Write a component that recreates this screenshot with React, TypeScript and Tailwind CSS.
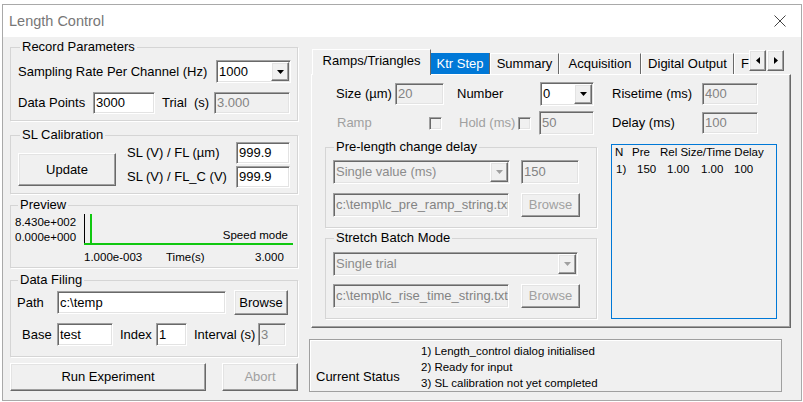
import React from "react";

const sunken =
  "border border-t-[#a0a0a0] border-l-[#a0a0a0] border-r-white border-b-white shadow-[inset_1px_1px_0_#696969,inset_-1px_-1px_0_#e3e3e3]";
const raised =
  "border border-t-white border-l-white border-r-[#696969] border-b-[#696969] shadow-[inset_-1px_-1px_0_#a0a0a0,inset_1px_1px_0_#e3e3e3]";
const group = "min-w-0 border border-[#d5d5d5] shadow-[1px_1px_0_#ffffff]";

type FieldProps = { className?: string; value: string; disabled?: boolean };

function Field({ className = "", value, disabled = false }: FieldProps) {
  return (
    <div
      className={`${sunken} ${
        disabled ? "bg-[#f0f0f0] text-[#838383]" : "bg-white text-black"
      } flex items-center pl-[2px] whitespace-nowrap overflow-hidden shrink-0 ${className}`}
    >
      {value}
    </div>
  );
}

function Combo({ className = "", value, disabled = false }: FieldProps) {
  return (
    <div
      className={`${sunken} ${
        disabled ? "bg-[#f0f0f0] text-[#8c8c8c]" : "bg-white text-black"
      } flex items-stretch p-[1px] shrink-0 ${className}`}
    >
      <div className="flex-1 flex items-center pl-[1px] whitespace-nowrap overflow-hidden">{value}</div>
      <div className={`${raised} w-[18px] bg-[#f0f0f0] flex items-center justify-center`}>
        <svg width="7" height="4" viewBox="0 0 7 4">
          <path d="M0 0H7L3.5 4Z" fill={disabled ? "#a0a0a0" : "#000000"} />
        </svg>
      </div>
    </div>
  );
}

function Button({
  className = "",
  children,
  disabled = false,
}: {
  className?: string;
  children: React.ReactNode;
  disabled?: boolean;
}) {
  return (
    <div
      className={`${raised} bg-[#f0f0f0] flex items-center justify-center shrink-0 ${
        disabled ? "text-[#a0a0a0]" : "text-black"
      } ${className}`}
    >
      {children}
    </div>
  );
}

function Check() {
  return <div className={`${sunken} w-[13px] h-[13px] bg-[#f0f0f0] shrink-0`} />;
}

function Legend({ children, className = "" }: { children: React.ReactNode; className?: string }) {
  return <legend className={`px-[2px] leading-[14px] ${className}`}>{children}</legend>;
}

function Arrow({ dir }: { dir: "l" | "r" }) {
  return (
    <div className={`${raised} w-[17px] h-[21px] bg-[#f0f0f0] flex items-center justify-center`}>
      <svg width="4" height="7" viewBox="0 0 4 7">
        <path d={dir === "l" ? "M4 0V7L0 3.5Z" : "M0 0V7L4 3.5Z"} fill="#000" />
      </svg>
    </div>
  );
}

function LeftColumn() {
  return (
    <div className="w-[288px] shrink-0 flex flex-col">
      {/* Record Parameters */}
      <fieldset className={`${group} mt-[3px] pb-[6px]`}>
        <Legend className="ml-[9px]">Record Parameters</Legend>
        <div className="flex items-center h-[23px] mt-[6px] pl-[7px]">
          <span className="whitespace-nowrap">Sampling Rate Per Channel (Hz)</span>
          <Combo className="ml-auto mr-[6px] w-[75px] h-[23px]" value="1000" />
        </div>
        <div className="flex items-center h-[22px] mt-[9px] pl-[7px]">
          <span className="w-[75px] whitespace-nowrap">Data Points</span>
          <Field className="w-[62px] h-[22px]" value="3000" />
          <span className="ml-[7px] w-[52px] whitespace-pre">Trial  (s)</span>
          <Field className="w-[76px] h-[22px]" value="3.000" disabled />
        </div>
      </fieldset>

      {/* SL Calibration */}
      <fieldset className={`${group} mt-[7px] pb-[5px]`}>
        <Legend className="ml-[9px]">SL Calibration</Legend>
        <div className="flex">
          <Button className="ml-[7px] mt-[11px] w-[98px] h-[33px]">Update</Button>
          <div className="ml-[11px] flex flex-col gap-[2px]">
            <div className="flex items-center h-[22px]">
              <span className="w-[109px] whitespace-nowrap">SL (V) / FL (µm)</span>
              <Field className="w-[54px] h-[22px]" value="999.9" />
            </div>
            <div className="flex items-center h-[22px]">
              <span className="w-[109px] whitespace-nowrap">SL (V) / FL_C (V)</span>
              <Field className="w-[54px] h-[22px]" value="999.9" />
            </div>
          </div>
        </div>
      </fieldset>

      {/* Preview */}
      <fieldset className={`${group} mt-[4px] pb-[3px]`}>
        <Legend className="ml-[7px]">Preview</Legend>
        <div className="flex pt-[2px]">
          <div className="w-[73px] pl-[4px] pt-[1px] text-[11.5px] leading-[15px]">
            <div>8.430e+002</div>
            <div>0.000e+000</div>
          </div>
          <div className="relative w-[210px] h-[31px]">
            <svg width="210" height="31" viewBox="0 0 210 31" className="block">
              <rect x="0" y="0" width="1" height="30" fill="#000000" />
              <rect x="6" y="0" width="2" height="30" fill="#10c810" />
              <rect x="0" y="29" width="209" height="2" fill="#10c810" />
            </svg>
            <span className="absolute right-[6px] top-[14px] text-[11.5px] leading-[14px] whitespace-nowrap">
              Speed mode
            </span>
          </div>
        </div>
        <div className="flex mt-[5px] text-[11.5px] leading-[14px]">
          <span className="ml-[73px] w-[82px]">1.000e-003</span>
          <span className="w-[89px]">Time(s)</span>
          <span>3.000</span>
        </div>
      </fieldset>

      {/* Data Filing */}
      <fieldset className={`${group} mt-[5px] pb-[10px]`}>
        <Legend className="ml-[7px]">Data Filing</Legend>
        <div className="flex items-center h-[25px] mt-[3px]">
          <span className="ml-[6px] w-[40px]">Path</span>
          <Field className="w-[169px] h-[23px]" value="c:\temp" />
          <Button className="ml-[8px] w-[54px] h-[25px]">Browse</Button>
        </div>
        <div className="flex items-center h-[23px] mt-[8px]">
          <span className="ml-[11px] w-[35px]">Base</span>
          <Field className="w-[56px] h-[23px]" value="test" />
          <span className="ml-[7px] w-[36px]">Index</span>
          <Field className="w-[31px] h-[23px]" value="1" />
          <span className="ml-[7px] w-[64px] whitespace-nowrap">Interval (s)</span>
          <Field className="w-[28px] h-[23px]" value="3" disabled />
        </div>
      </fieldset>

      <div className="flex mt-[6px]">
        <Button className="w-[196px] h-[28px]">Run Experiment</Button>
        <Button className="ml-[16px] w-[76px] h-[28px]" disabled>
          Abort
        </Button>
      </div>
    </div>
  );
}

function RightColumn() {
  const tab =
    "h-[21px] mb-[1px] shrink-0 border-t border-l border-r border-t-white border-l-white border-r-[#696969] pt-[3px] text-center whitespace-nowrap";
  return (
    <div className="ml-[11px] w-[480px] flex flex-col">
      {/* Tabs */}
      <div className="flex ml-[3px] mt-[12px] h-[26px] -mb-[1px] relative z-10">
        <div className="w-[437px] h-full flex items-end overflow-hidden">
          <div className="w-[119px] h-[26px] shrink-0 bg-[#f0f0f0] border-t border-l border-r border-t-white border-l-white border-r-[#696969] pt-[4px] text-center whitespace-nowrap">
            Ramps/Triangles
          </div>
          <div className="w-[59px] h-[21px] mb-[1px] shrink-0 bg-[#0078d7] text-white border-r border-r-[#696969] pt-[4px] text-center whitespace-nowrap">
            Ktr Step
          </div>
          <div className={`${tab} w-[69px]`}>Summary</div>
          <div className={`${tab} w-[82px]`}>Acquisition</div>
          <div className={`${tab} w-[93px]`}>Digital Output</div>
          <div className={`${tab} w-[40px] text-left pl-[6px]`}>F</div>
        </div>
        <div className="flex gap-[1px] mt-[1px] h-[21px]">
          <Arrow dir="l" />
          <Arrow dir="r" />
        </div>
      </div>

      {/* Panel */}
      <div className="ml-[2px] w-[480px] h-[254px] shrink-0 border border-t-white border-l-white border-r-[#696969] border-b-[#696969] shadow-[inset_-1px_-1px_0_#a0a0a0] flex flex-col">
        <div className="flex items-center h-[24px] mt-[7px]">
          <span className="ml-[24px] w-[59px] whitespace-nowrap">Size (µm)</span>
          <Field className="w-[49px] h-[22px]" value="20" disabled />
          <span className="ml-[13px] w-[83px]">Number</span>
          <Combo className="w-[54px] h-[24px]" value="0" />
          <span className="ml-[18px] w-[90px] whitespace-nowrap">Risetime (ms)</span>
          <Field className="w-[56px] h-[22px]" value="400" disabled />
        </div>
        <div className="flex items-center h-[24px] mt-[5px]">
          <span className="ml-[25px] w-[92px] text-[#a0a0a0]">Ramp</span>
          <Check />
          <span className="ml-[17px] w-[59px] text-[#a0a0a0] whitespace-nowrap">Hold (ms)</span>
          <Check />
          <Field className="ml-[8px] w-[55px] h-[24px]" value="50" disabled />
          <span className="ml-[18px] w-[90px] whitespace-nowrap">Delay (ms)</span>
          <Field className="w-[56px] h-[22px]" value="100" disabled />
        </div>

        <div className="flex mt-[5px]">
          <div className="ml-[13px] w-[272px] flex flex-col">
            <fieldset className={`${group} pb-[10px]`}>
              <Legend className="ml-[8px]">Pre-length change delay</Legend>
              <div className="flex mt-[6px]">
                <Combo className="ml-[7px] w-[177px] h-[24px]" value="Single value (ms)" disabled />
                <Field className="ml-[11px] w-[58px] h-[24px]" value="150" disabled />
              </div>
              <div className="flex mt-[9px]">
                <Field
                  className="ml-[7px] w-[176px] h-[24px]"
                  value="c:\temp\lc_pre_ramp_string.txt"
                  disabled
                />
                <Button className="ml-[12px] w-[59px] h-[24px]" disabled>
                  Browse
                </Button>
              </div>
            </fieldset>
            <fieldset className={`${group} mt-[3px] pb-[10px]`}>
              <Legend className="ml-[8px]">Stretch Batch Mode</Legend>
              <div className="flex mt-[7px]">
                <Combo className="ml-[7px] w-[245px] h-[24px]" value="Single trial" disabled />
              </div>
              <div className="flex mt-[8px]">
                <Field
                  className="ml-[7px] w-[176px] h-[24px]"
                  value="c:\temp\lc_rise_time_string.txt"
                  disabled
                />
                <Button className="ml-[12px] w-[59px] h-[24px]" disabled>
                  Browse
                </Button>
              </div>
            </fieldset>
          </div>

          <div className="ml-[14px] mt-[4px] w-[166px] h-[175px] border border-[#0078d7] bg-[#f0f0f0] text-[11.5px] leading-[14px]">
            <div className="flex pl-[3px]">
              <span className="w-[17px]">N</span>
              <span className="w-[28px]">Pre</span>
              <span className="whitespace-nowrap">Rel Size/Time Delay</span>
            </div>
            <div className="flex pl-[4px] mt-[3px]">
              <span className="w-[21px]">1)</span>
              <span className="w-[30px]">150</span>
              <span className="w-[34px]">1.00</span>
              <span className="w-[33px]">1.00</span>
              <span>100</span>
            </div>
          </div>
        </div>
      </div>

      {/* Status */}
      <div className="mt-[11px] w-[473px] h-[53px] border border-[#a0a0a0] shadow-[inset_1px_1px_0_#ffffff] flex">
        <span className="ml-[6px] mt-[30px] w-[105px] whitespace-nowrap">Current Status</span>
        <div className="pt-[3px] text-[11.5px] leading-[16px] whitespace-nowrap">
          <div>1) Length_control dialog initialised</div>
          <div>2) Ready for input</div>
          <div>3) SL calibration not yet completed</div>
        </div>
      </div>
    </div>
  );
}

export default function App() {
  return (
    <div className="w-[803px] h-[402px] bg-white pt-[4px] pl-[2px] font-['Liberation_Sans',Arial,sans-serif] text-[13px] leading-[14px] text-black overflow-hidden">
      <div className="w-[800px] h-[397px] border border-[#a9a9a9] bg-[#f0f0f0] flex flex-col">
        <div className="h-[32px] bg-white flex items-center shrink-0">
          <span className="ml-[6px] text-[14.5px] text-[#777777]">Length Control</span>
          <svg className="ml-auto mr-[15px]" width="12" height="12" viewBox="0 0 12 12">
            <path d="M0.5 0.5L11.5 11.5M11.5 0.5L0.5 11.5" stroke="#444444" strokeWidth="1" />
          </svg>
        </div>
        <div className="flex pl-[7px]">
          <LeftColumn />
          <RightColumn />
        </div>
      </div>
    </div>
  );
}
